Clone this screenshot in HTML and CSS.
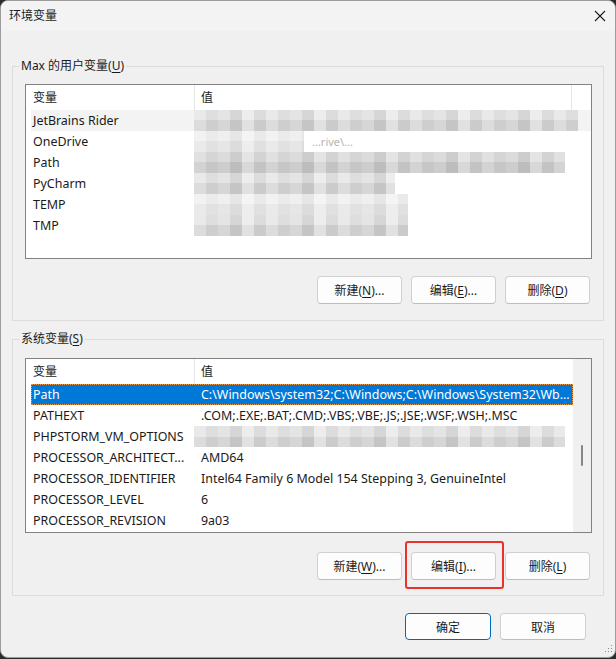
FILE: index.html
```html
<!DOCTYPE html>
<html lang="zh-CN">
<head>
    <meta charset="UTF-8">
    <meta name="viewport" content="width=device-width, initial-scale=1.0">
    <title>环境变量</title>
    <link rel="stylesheet" href="styles.css">
</head>
<body>
    <div class="window">
        <div class="titlebar">
            <span class="title">环境变量</span>
            <span class="close">
                <svg width="12" height="12" viewBox="0 0 12 12"><path d="M1 1L11 11M11 1L1 11" stroke="#1b1b1b" stroke-width="1.1" fill="none"/></svg>
            </span>
        </div>

        <!-- User variables -->
        <fieldset class="group">
            <legend>Max 的用户变量(<u>U</u>)</legend>
            <div class="list">
                <div class="list-body">
                    <div class="list-head">
                        <div class="col-name">变量</div>
                        <div class="col-value col-end">值</div>
                    </div>
                    <div class="row hover"><div class="col-name">JetBrains Rider</div><div class="col-value"><span class="blur blur-xl"></span></div></div>
                    <div class="row"><div class="col-name">OneDrive</div><div class="col-value"><span class="blur blur-s light"></span><span class="faint">...rive\...</span></div></div>
                    <div class="row"><div class="col-name">Path</div><div class="col-value"><span class="blur blur-l dark"></span></div></div>
                    <div class="row"><div class="col-name">PyCharm</div><div class="col-value"><span class="blur blur-m"></span></div></div>
                    <div class="row"><div class="col-name">TEMP</div><div class="col-value"><span class="blur blur-m2 light"></span></div></div>
                    <div class="row"><div class="col-name">TMP</div><div class="col-value"><span class="blur blur-m2"></span></div></div>
                </div>
            </div>
            <div class="actions">
                <button class="btn">新建(<u>N</u>)...</button>
                <button class="btn">编辑(<u>E</u>)...</button>
                <button class="btn">删除(<u>D</u>)</button>
            </div>
        </fieldset>

        <!-- System variables -->
        <fieldset class="group group-system">
            <legend>系统变量(<u>S</u>)</legend>
            <div class="list">
                <div class="list-body">
                    <div class="list-head">
                        <div class="col-name">变量</div>
                        <div class="col-value">值</div>
                    </div>
                    <div class="row selected"><div class="col-name">Path</div><div class="col-value">C:\Windows\system32;C:\Windows;C:\Windows\System32\Wb...</div></div>
                    <div class="row"><div class="col-name">PATHEXT</div><div class="col-value">.COM;.EXE;.BAT;.CMD;.VBS;.VBE;.JS;.JSE;.WSF;.WSH;.MSC</div></div>
                    <div class="row"><div class="col-name">PHPSTORM_VM_OPTIONS</div><div class="col-value"><span class="blur blur-l"></span></div></div>
                    <div class="row"><div class="col-name">PROCESSOR_ARCHITECT...</div><div class="col-value">AMD64</div></div>
                    <div class="row"><div class="col-name">PROCESSOR_IDENTIFIER</div><div class="col-value">Intel64 Family 6 Model 154 Stepping 3, GenuineIntel</div></div>
                    <div class="row"><div class="col-name">PROCESSOR_LEVEL</div><div class="col-value">6</div></div>
                    <div class="row"><div class="col-name">PROCESSOR_REVISION</div><div class="col-value">9a03</div></div>
                </div>
                <div class="scrollbar"><div class="thumb"></div></div>
            </div>
            <div class="actions">
                <button class="btn">新建(<u>W</u>)...</button>
                <button class="btn">编辑(<u>I</u>)...</button>
                <button class="btn">删除(<u>L</u>)</button>
            </div>
        </fieldset>

        <div class="footer">
            <button class="btn btn-wide btn-default">确定</button>
            <button class="btn btn-wide">取消</button>
        </div>

        <!-- red annotation around the edit button -->
        <div class="highlight"></div>

        <svg class="grip" width="12" height="12" viewBox="0 0 12 12">
            <rect x="9" y="1" width="1" height="1" fill="#8a8a8a"/>
            <rect x="6" y="4" width="1" height="1" fill="#8a8a8a"/>
            <rect x="9" y="4" width="1" height="1" fill="#8a8a8a"/>
            <rect x="3" y="7" width="1" height="1" fill="#8a8a8a"/>
            <rect x="6" y="7" width="1" height="1" fill="#8a8a8a"/>
            <rect x="9" y="7" width="1" height="1" fill="#8a8a8a"/>
        </svg>
    </div>
</body>
</html>
```

FILE: styles.css
```css
/* Windows 11 style "environment variables" dialog */
body { margin: 0; background: #2b2b2b; font-family: "Noto Sans", "Noto Sans CJK SC", sans-serif; font-size: 12px; color: #1a1a1a; }
u { text-decoration-thickness: 1px; text-underline-offset: 2px; }

.window { position: relative; height: 658px; box-sizing: border-box; border: 1px solid #9c9c9c; border-radius: 8px; background: #f0f0f0; overflow: hidden; }

.titlebar { height: 30px; display: flex; align-items: center; justify-content: space-between; padding: 0 9px 0 8px; background: #f3f3f3; }
.title { line-height: 16px; }
.close { display: flex; }

.group { margin: 27px 11px 0 11px; padding: 10px 11px 16px 12px; border: 1px solid #dcdcdc; }
.group legend { margin-left: -6px; padding: 0 2px; line-height: 16px; }
.group-system { margin-top: 10px; padding-top: 11px; padding-bottom: 15px; }

.list { display: flex; height: 175px; box-sizing: border-box; border: 1px solid #828282; background: #fff; }
.list-body { flex: 1; padding-left: 5px; overflow: hidden; }
.list-head { display: flex; height: 25px; line-height: 25px; }
.list-head .col-value { border-left: 1px solid #e5e5e5; padding-left: 6px; width: 370px; flex: none; }
.list-head .col-end { border-right: 1px solid #e5e5e5; }

.row { display: flex; height: 21px; line-height: 21px; white-space: nowrap; font-size: 12.45px; }
.col-name { width: 161px; padding-left: 2px; flex: none; overflow: hidden; }
.col-value { flex: 1; padding-left: 7px; display: flex; align-items: center; overflow: hidden; }
.row .col-value:has(.blur) { padding-left: 0; }
.hover { background: #f3f3f3; }
.selected { background: #0078d7; color: #fff; outline: 1px dotted #e89a4a; outline-offset: -1px; }

.blur { display: block; height: 21px; flex: none; background-image: linear-gradient(180deg, rgba(255,255,255,0.22) 50%, rgba(0,0,0,0.03) 50%), repeating-linear-gradient(90deg, #e3e3e3 0 12px, #d5d5d5 12px 24px, #dddddd 24px 36px, #cbcbcb 36px 48px, #e8e8e8 48px 60px, #d2d2d2 60px 72px); }
.blur.light { opacity: 0.6; }
.blur.dark { filter: brightness(0.96); }
.blur-xl { width: 384px; }
.blur-l { width: 371px; }
.blur-m { width: 201px; }
.blur-m2 { width: 214px; }
.blur-s { width: 110px; }
.faint { color: #b5b5b5; padding-left: 8px; font-size: 11px; }

.scrollbar { width: 18px; flex: none; background: #f0f0f0; padding-top: 86px; box-sizing: border-box; }
.thumb { width: 2px; height: 21px; margin-left: 8px; background: #868686; border-radius: 1px; }

.actions { display: flex; justify-content: flex-end; gap: 9px; margin-top: 17px; margin-right: 2px; }
.group-system .actions { margin-top: 19px; }

.btn { width: 85px; height: 28px; box-sizing: border-box; border: 1px solid #d0d0d0; border-bottom-color: #bdbdbd; border-radius: 4px; background: #fdfdfd; font: inherit; color: #1a1a1a; padding: 0; }
.btn-wide { width: 86px; height: 27px; }
.btn-default { border: 1px solid #0067c0; }

.footer { display: flex; justify-content: flex-end; gap: 9px; margin-top: 17px; padding-right: 29px; }

.highlight { position: absolute; left: 404px; top: 540px; width: 99px; height: 48px; box-sizing: border-box; border: 2px solid #e8322a; border-radius: 3px; }
.grip { position: absolute; right: 1px; bottom: 1px; }
```
